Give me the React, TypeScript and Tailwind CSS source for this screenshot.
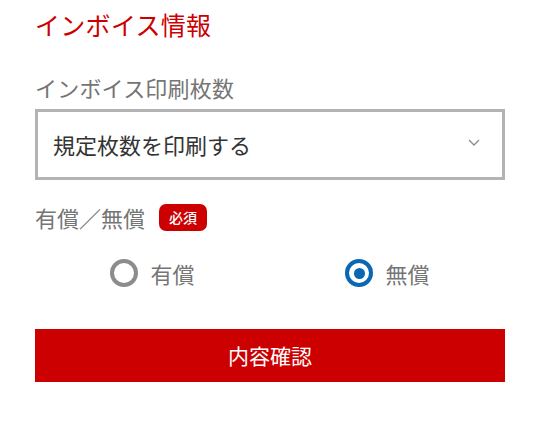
import React, { useState } from 'react';

const font = { fontFamily: '"Noto Sans CJK JP", "Noto Sans", sans-serif' };

const Radio = ({ checked, label, onClick }: { checked: boolean; label: string; onClick: () => void }) => (
    <button type="button" onClick={onClick} className="flex items-center gap-[12px] cursor-pointer">
        {checked ? (
            <span className="w-[28px] h-[28px] rounded-full border-[4px] border-[#0a67b4] flex items-center justify-center">
                <span className="w-[11px] h-[11px] rounded-full bg-[#0a67b4]" />
            </span>
        ) : (
            <span className="w-[28px] h-[28px] rounded-full border-[4px] border-[#8c8c8c]" />
        )}
        <span className="text-[22px] leading-[32px] text-[#757575]">{label}</span>
    </button>
);

const App = () => {
    const [paid, setPaid] = useState(false);

    return (
        <div style={font} className="w-[540px] h-[425px] bg-white px-[35px] pt-[6px]">
            {/* Section title */}
            <h2 className="text-[25px] leading-[36px] text-[#cc0000] tracking-[0.3px]">インボイス情報</h2>

            {/* Print count select */}
            <div className="mt-[29px] text-[22px] leading-[32px] text-[#757575] tracking-[0.2px]">インボイス印刷枚数</div>
            <div className="mt-[6px] h-[71px] border-[3px] border-[#b3b3b3] flex items-center justify-between pl-[15px] pr-[22px]">
                <span className="text-[22px] text-[#333333]">規定枚数を印刷する</span>
                <svg width="12" height="7" viewBox="0 0 12 7" fill="none" className="-mt-[4px]">
                    <path d="M1 1l5 5 5-5" stroke="#8a8a8a" strokeWidth="1.3" />
                </svg>
            </div>

            {/* Paid / free */}
            <div className="mt-[21px] flex items-center h-[32px]">
                <span className="text-[22px] leading-[32px] text-[#757575]">有償／無償</span>
                <span className="ml-[14px] h-[27px] w-[48px] rounded-[7px] bg-[#cc0000] text-white text-[14px] font-medium flex items-center justify-center">必須</span>
            </div>
            <div className="mt-[20px] grid grid-cols-2 h-[40px]">
                <div className="flex items-center justify-center">
                    <Radio checked={paid} label="有償" onClick={() => setPaid(true)} />
                </div>
                <div className="flex items-center justify-center">
                    <Radio checked={!paid} label="無償" onClick={() => setPaid(false)} />
                </div>
            </div>

            {/* Submit */}
            <button type="button" className="mt-[36px] w-full h-[53px] bg-[#cc0000] text-white text-[21px] flex items-center justify-center">
                内容確認
            </button>
        </div>
    );
};

export default App;
